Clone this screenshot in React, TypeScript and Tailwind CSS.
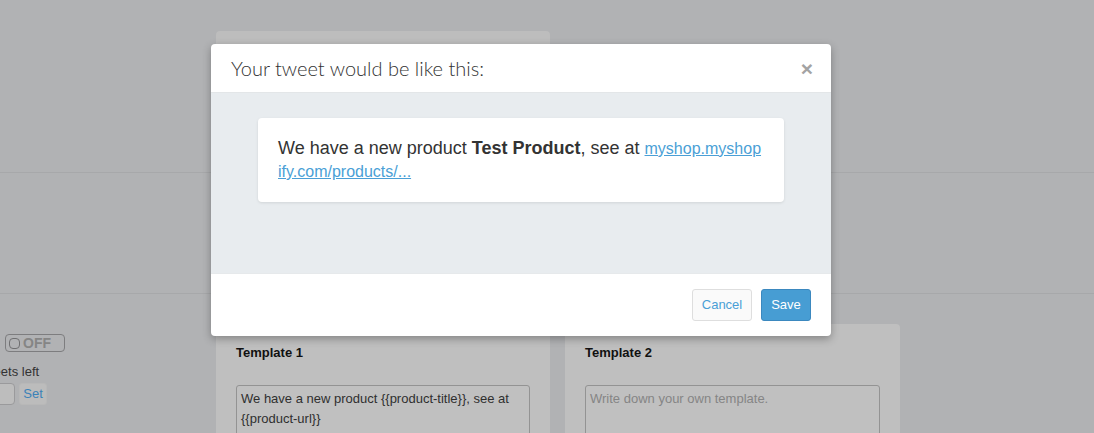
export default function App() {
  return (
    <div className="relative h-[433px] w-full overflow-hidden bg-[#b1b2b4] font-['Liberation_Sans',Arial,sans-serif] text-[13px]">
      {/* page behind the overlay */}
      <div className="h-[173px] overflow-hidden border-b border-[#a7a8aa] pl-[216px] pt-[31px]">
        <div className="h-[160px] w-[334px] rounded-[4px] bg-[#bdbdbd]"></div>
      </div>
      <div className="h-[121px] border-b border-[#a7a8aa]"></div>
      <div className="flex pt-[30px]">
        <div className="w-[216px] shrink-0 pt-[10px]">
          <div className="ml-[5px] flex h-[18px] w-[60px] items-center gap-[3px] rounded-[4px] border border-[#7d7d7f] pl-[3px] text-[14px] font-bold leading-none text-[#858585]">
            <span className="inline-block h-[11px] w-[11px] rounded-[4px] border border-[#6f6f71]"></span>
            OFF
          </div>
          <div className="ml-[-23px] mt-[12px] text-[13px] leading-[16px] text-[#333]">Tweets left</div>
          <div className="mt-[3px] flex items-center gap-[4px]">
            <div className="ml-[-40px] h-[22px] w-[55px] rounded-[4px] border border-[#9a9a9c] bg-[#bdbdbd]"></div>
            <div className="flex h-[22px] w-[28px] items-center justify-center rounded-[3px] border border-[#b8b8b8] bg-[#bcbcbc] text-[13px] text-[#3b82b8]">Set</div>
          </div>
        </div>
        <div className="h-[200px] w-[334px] shrink-0 rounded-[4px] bg-[#bfbfbf] px-5 pt-[21px]">
          <div className="text-[13px] font-bold leading-[16px] text-[#111]">Template 1</div>
          <div className="mt-[24px] h-[80px] rounded-[3px] border border-[#939393] bg-[#c0c0c0] px-[4px] pt-[3px] text-[13px] leading-[20px] text-[#2f2f2f]">
            We have a new product {"{{product-title}}"}, see at {"{{product-url}}"}
          </div>
        </div>
        <div className="ml-[15px] h-[200px] w-[335px] shrink-0 rounded-[4px] bg-[#bfbfbf] px-5 pt-[21px]">
          <div className="text-[13px] font-bold leading-[16px] text-[#111]">Template 2</div>
          <div className="mt-[24px] h-[80px] rounded-[3px] border border-[#939393] bg-[#c0c0c0] px-[4px] pt-[3px] text-[13px] leading-[20px] text-[#858585]">
            Write down your own template.
          </div>
        </div>
      </div>

      {/* modal */}
      <div className="absolute left-[211px] top-[44px] w-[620px] overflow-hidden rounded-[4px] bg-white shadow-[0_3px_9px_rgba(0,0,0,0.3)]">
        <div className="flex h-[49px] items-center justify-between border-b border-[#e3e6e8] pl-5 pr-[18px]">
          <h3 className="font-['Lato',sans-serif] text-[20px] font-light text-[#333]">Your tweet would be like this:</h3>
          <button className="text-[21px] font-bold leading-none text-[#a3a3a3]">×</button>
        </div>
        <div className="h-[180px] bg-[#e8ecef] pt-[25px]">
          <div className="mx-[47px] rounded-[4px] bg-white py-[19px] pl-5 pr-[10px] text-[18px] leading-[22px] text-[#333] shadow-[0_1px_3px_rgba(0,0,0,0.1)]">
            We have a new product <b>Test Product</b>, see at{" "}
            <a className="text-[16px] text-[#4a9fd6] underline">
              myshop.myshop
              <br />
              ify.com/products/...
            </a>
          </div>
        </div>
        <div className="flex h-[63px] items-center justify-end gap-[9px] border-t border-[#e6e9eb] pr-5">
          <button className="h-[32px] w-[60px] rounded-[3px] border border-[#dedede] bg-[#fafafa] text-[13px] text-[#4a9fd6]">Cancel</button>
          <button className="h-[32px] w-[50px] rounded-[3px] border border-[#3b88bf] bg-[#479dd3] text-[13px] text-white">Save</button>
        </div>
      </div>
    </div>
  );
}
